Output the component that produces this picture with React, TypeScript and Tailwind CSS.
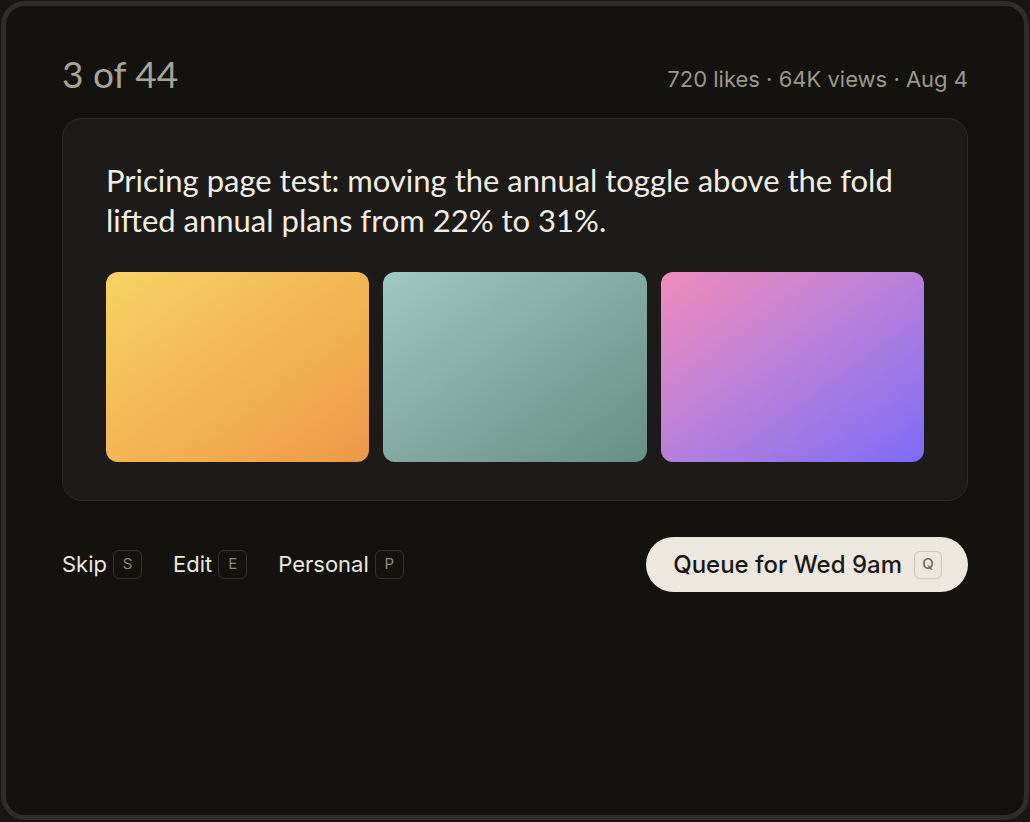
import React from "react";

const humanist = { fontFamily: "Lato, 'Noto Sans', sans-serif" };
const ui = { fontFamily: "Inter, 'Noto Sans', sans-serif" };

function Key({ k, light }: { k: string; light?: boolean }) {
  return (
    <span
      className={
        light
          ? "inline-flex h-[28px] w-[28px] items-center justify-center rounded-[6px] border border-[#cbc6bc] text-[15px] font-medium text-[#6f6b64]"
          : "inline-flex h-[29px] w-[29px] items-center justify-center rounded-[6px] border border-[#34322f] text-[15px] text-[#8c8880]"
      }
    >
      {k}
    </span>
  );
}

function Action({ label, k }: { label: string; k: string }) {
  return (
    <div className="flex items-center gap-[6px]">
      <span className="text-[22px] text-[#ebe7df]">{label}</span>
      <Key k={k} />
    </div>
  );
}

export default function App() {
  return (
    <div className="h-[822px] w-[1030px] bg-[#171614] p-px" style={ui}>
      <div className="flex h-[819px] w-[1028px] flex-col rounded-[24px] border-[5px] border-[#2e2d2a] bg-[#13120f] px-[56px] pt-[42px]">
        <div className="flex items-end justify-between">
          <span className="text-[37px] leading-[52px] text-[#a8a397]" style={humanist}>
            3 of 44
          </span>
          <span className="pb-[4px] text-[22px] text-[#9b978f]">720 likes · 64K views · Aug 4</span>
        </div>

        <div className="mt-[18px] rounded-[20px] border border-[#2c2b28] bg-[#1c1b19] px-[43px] pb-[38px] pt-[41px]">
          <p className="text-[31px] leading-[40px] text-[#f1ede4]" style={humanist}>
            Pricing page test: moving the annual toggle above the fold
            <br />
            lifted annual plans from 22% to 31%.
          </p>
          <div className="mt-[32px] grid grid-cols-3 gap-[14px]">
            <div className="h-[190px] rounded-[12px] bg-gradient-to-br from-[#f6d364] to-[#ee9848]" />
            <div className="h-[190px] rounded-[12px] bg-gradient-to-br from-[#a0c7c1] to-[#668f85]" />
            <div className="h-[190px] rounded-[12px] bg-gradient-to-br from-[#f28bbb] to-[#7d6af6]" />
          </div>
        </div>

        <div className="mt-[36px] flex items-center justify-between">
          <div className="flex items-center gap-[31px]">
            <Action label="Skip" k="S" />
            <Action label="Edit" k="E" />
            <Action label="Personal" k="P" />
          </div>
          <button className="flex h-[55px] items-center gap-[12px] rounded-full bg-[#ece8e0] pl-[27px] pr-[26px] text-[24px] font-medium text-[#1a1917]">
            Queue for Wed 9am
            <Key k="Q" light />
          </button>
        </div>
      </div>
    </div>
  );
}
